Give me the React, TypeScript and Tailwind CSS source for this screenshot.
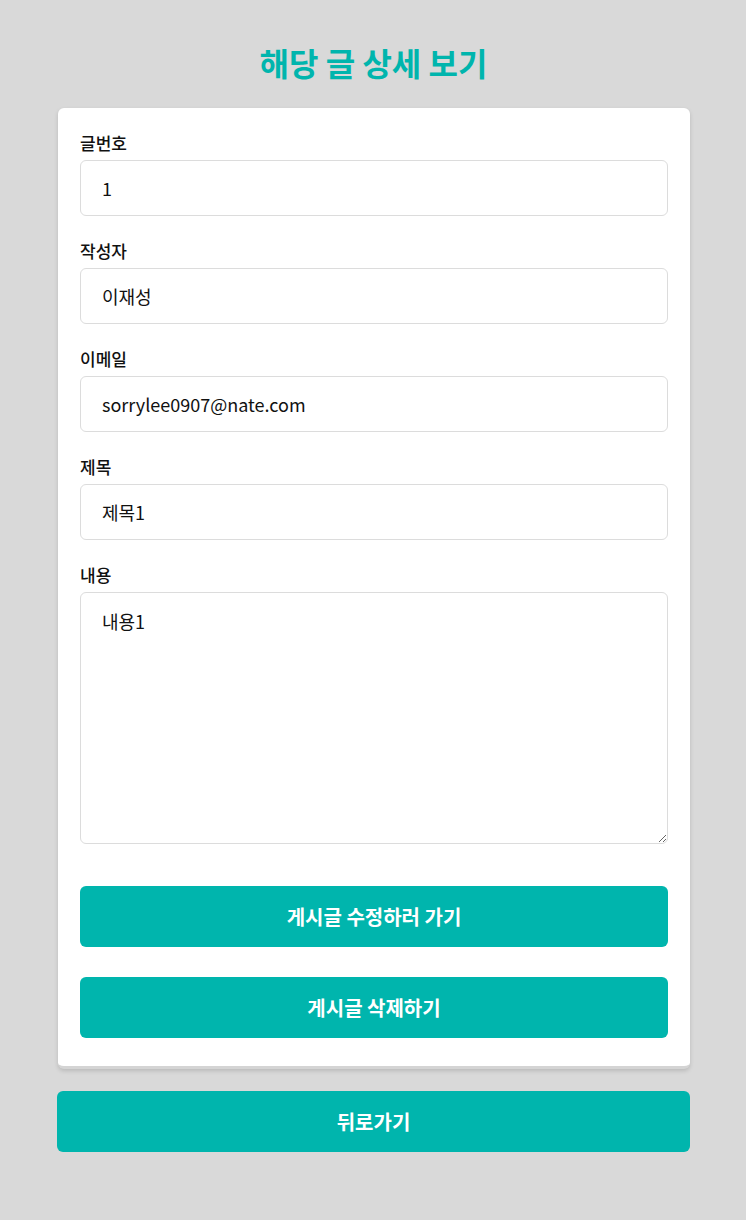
const font = { fontFamily: '"Noto Sans CJK KR", "Noto Sans", sans-serif' };

interface FieldProps {
  label: string;
  value: string;
}

function Field({ label, value }: FieldProps) {
  return (
    <div className="mb-6">
      <label className="block text-[17px] leading-[22px] font-medium text-[#111] mb-1.5">{label}</label>
      <input
        readOnly
        value={value}
        className="w-full h-14 px-[21px] text-[18px] text-[#111] bg-white border border-[#dcdcdc] rounded-md outline-none"
      />
    </div>
  );
}

export default function App() {
  return (
    <div className="min-h-[1220px] bg-[#d9d9d9] pt-[40px] pb-16" style={font}>
      <div className="w-[633px] ml-[57px]">
        <h1 className="text-center text-[32px] leading-[44px] font-bold text-[#00b5ad] mb-[24px]">
          해당 글 상세 보기
        </h1>

        <div className="ml-px bg-white rounded-md border-b-[3px] border-[#d4d4d4] shadow-[0_2px_4px_rgba(0,0,0,0.15)] px-[22px] pt-6 pb-[28px]">
          <Field label="글번호" value="1" />
          <Field label="작성자" value="이재성" />
          <Field label="이메일" value="sorrylee0907@nate.com" />
          <Field label="제목" value="제목1" />

          <div>
            <label className="block text-[17px] leading-[22px] font-medium text-[#111] mb-1.5">내용</label>
            <textarea
              readOnly
              value="내용1"
              className="block w-full h-[252px] px-[21px] pt-[15px] text-[18px] text-[#111] bg-white border border-[#dcdcdc] rounded-md outline-none resize-y"
            />
          </div>

          <button className="mt-[42px] w-full h-[61px] rounded-md bg-[#00b5ad] text-white text-[20px] font-bold">
            게시글 수정하러 가기
          </button>
          <button className="mt-[30px] w-full h-[61px] rounded-md bg-[#00b5ad] text-white text-[20px] font-bold">
            게시글 삭제하기
          </button>
        </div>

        <button className="mt-[22px] w-full h-[61px] rounded-md bg-[#00b5ad] text-white text-[20px] font-bold">
          뒤로가기
        </button>
      </div>
    </div>
  );
}
